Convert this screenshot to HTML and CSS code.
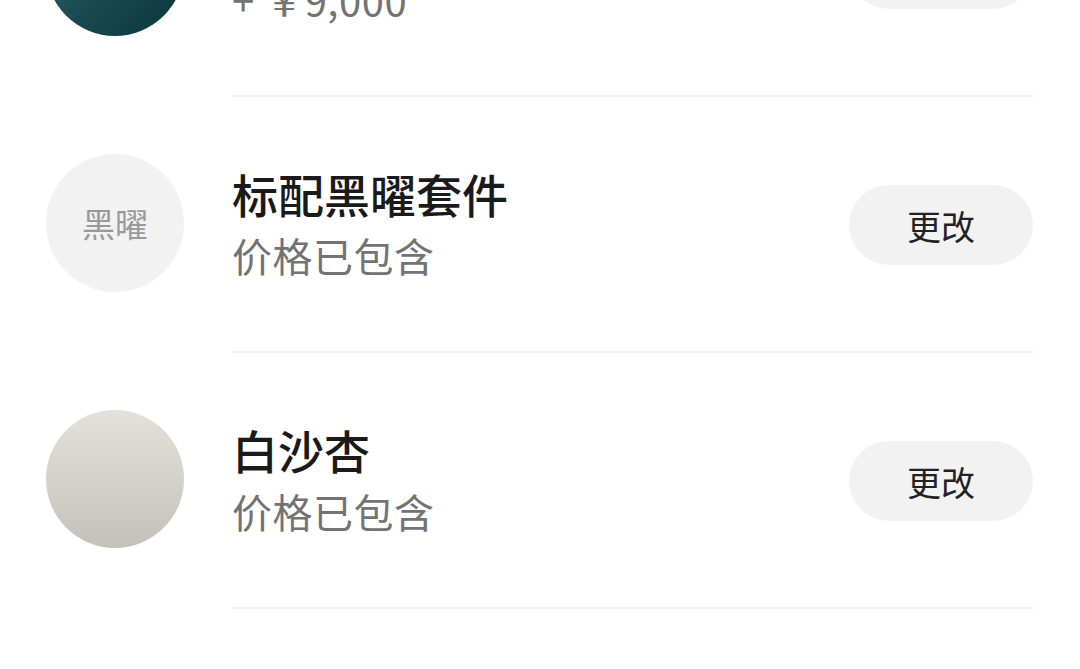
FILE: index.html
```html
<!DOCTYPE html>
<html lang="zh-CN">

<head>
    <meta charset="UTF-8">
    <title>选装配置</title>
    <link rel="stylesheet" href="styles.css">
</head>

<body>
    <ul class="option_list">
        <li class="option_row">
            <div class="swatch swatch_teal"></div>
            <div class="option_body">
                <div class="option_text">
                    <div class="option_name">青黛蓝</div>
                    <div class="option_price">+ ￥9,000</div>
                </div>
                <button class="change_btn">更改</button>
            </div>
        </li>
        <li class="option_row">
            <div class="swatch swatch_label">黑曜</div>
            <div class="option_body">
                <div class="option_text">
                    <div class="option_name">标配黑曜套件</div>
                    <div class="option_price">价格已包含</div>
                </div>
                <button class="change_btn">更改</button>
            </div>
        </li>
        <li class="option_row">
            <div class="swatch swatch_sand"></div>
            <div class="option_body">
                <div class="option_text">
                    <div class="option_name">白沙杏</div>
                    <div class="option_price">价格已包含</div>
                </div>
                <button class="change_btn">更改</button>
            </div>
        </li>
    </ul>
</body>

</html>
```

FILE: styles.css
```css
body {
    margin: 0;
    background-color: #fff;
    font-family: 'Noto Sans CJK SC', 'Noto Sans', sans-serif;
    color: #1a1a1a;
    overflow: hidden;
}

.option_list {
    list-style: none;
    margin: -159px 0 0 0;
    padding: 0;
}

.option_row {
    display: flex;
    align-items: center;
    padding-left: 46px;
}

.swatch {
    width: 138px;
    height: 138px;
    border-radius: 50%;
    flex-shrink: 0;
    margin-right: 48px;
    margin-bottom: 4px;
}

.swatch_teal {
    background: linear-gradient(135deg, #2d6f73 0%, #174a50 55%, #0c353b 100%);
}

.swatch_label {
    background-color: #f2f2f2;
    color: #999;
    font-size: 33px;
    display: flex;
    align-items: center;
    justify-content: center;
}

.swatch_sand {
    background: linear-gradient(180deg, #e4e1dc 0%, #d3cfc9 55%, #c4c0ba 100%);
}

.option_body {
    flex: 1;
    height: 254px;
    margin-right: 47px;
    border-bottom: 2px solid #f1f1f1;
    display: flex;
    align-items: center;
    justify-content: space-between;
}

.option_text {
    margin-bottom: 5px;
}

.option_name {
    font-size: 46px;
    font-weight: 500;
    line-height: 60px;
    color: #1a1a1a;
}

.option_price {
    font-size: 40px;
    line-height: 52px;
    margin-top: 6px;
    color: #737373;
    letter-spacing: 0.5px;
}

.change_btn {
    width: 184px;
    height: 80px;
    border: none;
    border-radius: 40px;
    background-color: #f2f2f2;
    color: #222;
    font-family: inherit;
    font-size: 34px;
    padding: 0;
    margin-top: 2px;
}
```
